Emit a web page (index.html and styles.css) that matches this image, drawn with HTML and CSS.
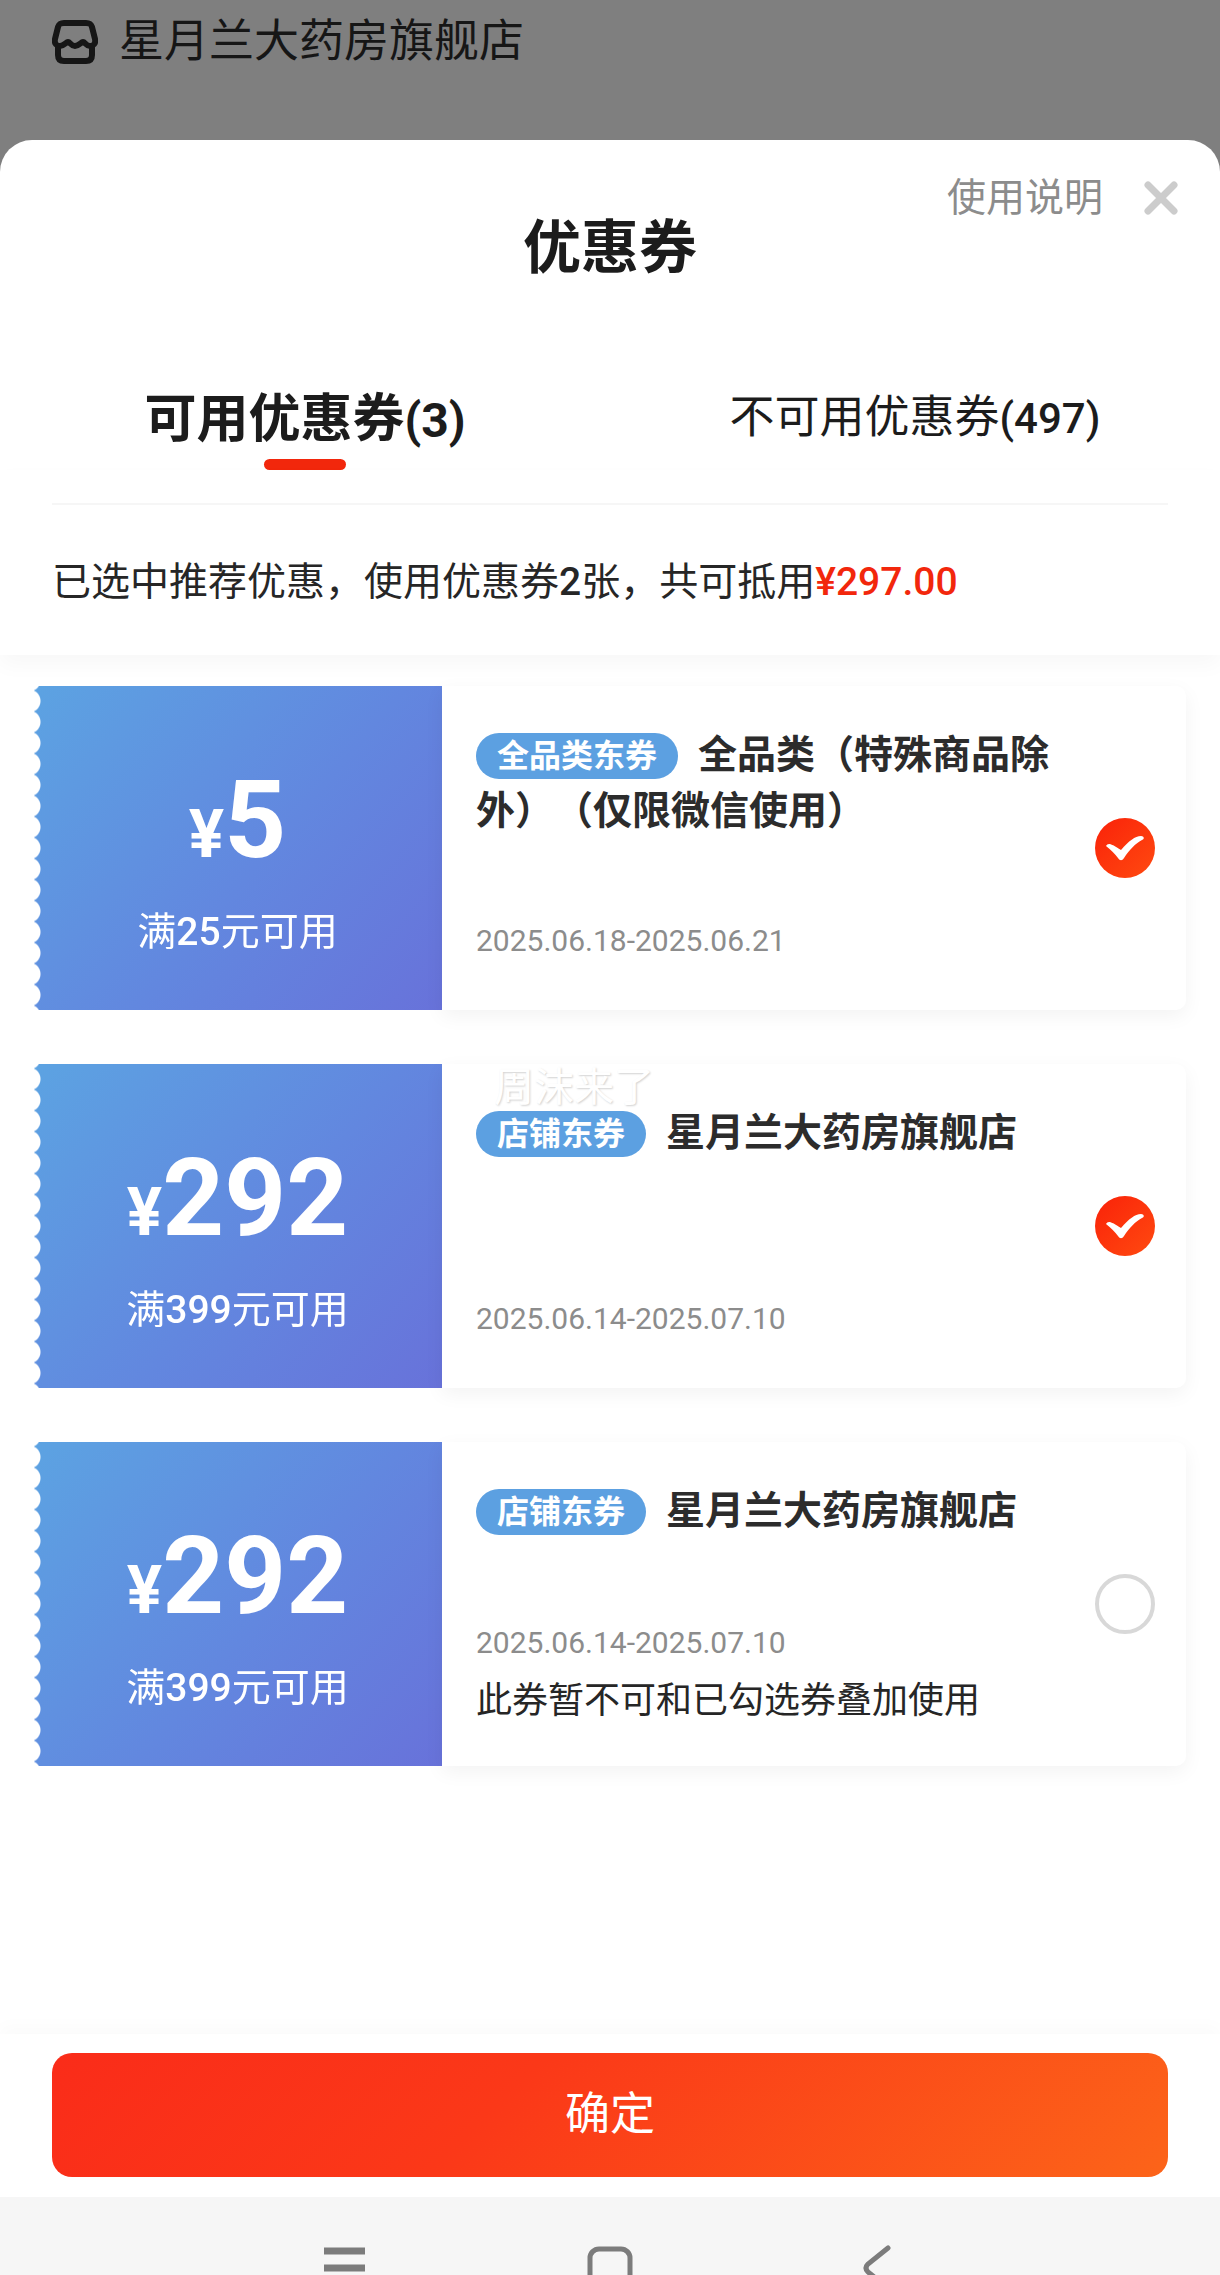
FILE: index.html
```html
<!DOCTYPE html>
<html lang="zh-CN">
<head>
<meta charset="utf-8">
<meta name="viewport" content="width=device-width, initial-scale=1">
<title>优惠券</title>
<link rel="stylesheet" href="styles.css">
</head>
<body>
<header class="store">
  <svg class="store-icon" viewBox="0 0 46 44" aria-hidden="true">
    <path d="M12 3h22c4 0 5 1 6 4l3 12c1 5-2 7-5 7-4 0-5-4-7-4s-4 4-8 4-5-4-7-4-4 4-8 4c-3 0-6-2-5-7L6 7c1-3 2-4 6-4z"/>
    <path d="M6 25v10c0 4 2 6 6 6h22c4 0 6-2 6-6V25"/>
  </svg>
  <span>星月兰大药房旗舰店</span>
</header>

<main class="sheet">
  <div class="sheet-head">
    <h1 class="sheet-title">优惠券</h1>
    <div class="sheet-actions">
      <a class="help" href="#">使用说明</a>
      <button class="close" type="button" aria-label="关闭">
        <svg viewBox="0 0 36 36" aria-hidden="true"><path d="M5 5l26 26M31 5L5 31"/></svg>
      </button>
    </div>
  </div>

  <div class="tabs" role="tablist">
    <button class="tab active" type="button" role="tab" aria-selected="true"><span>可用优惠券<b>(3)</b></span></button>
    <button class="tab" type="button" role="tab" aria-selected="false"><span>不可用优惠券<b>(497)</b></span></button>
  </div>

  <p class="summary">已选中推荐优惠，使用优惠券<b>2</b>张，共可抵用<strong>¥297.00</strong></p>

  <div class="coupons">
    <label class="coupon">
      <span class="stub">
        <span class="amount"><small>¥</small>5</span>
        <span class="condition">满<b>25</b>元可用</span>
      </span>
      <span class="detail">
        <span class="info">
          <span class="name"><span class="tag">全品类东券</span>全品类（特殊商品除外）（仅限微信使用）</span>
          <span class="date">2025.06.18-2025.06.21</span>
        </span>
        <span class="pick">
          <input type="checkbox" checked>
          <svg viewBox="0 0 60 60" aria-hidden="true"><path d="M11 28c2-4 6-2 15 4 8-9 14-14 20-14 3 0 4 3 1 4-7 4-12 9-18 18-2 3-4 3-6 0-3-4-7-8-12-12z"/></svg>
        </span>
      </span>
    </label>

    <label class="coupon">
      <span class="stub">
        <span class="amount"><small>¥</small>292</span>
        <span class="condition">满<b>399</b>元可用</span>
      </span>
      <span class="detail">
        <span class="watermark">周沫来了</span>
        <span class="info">
          <span class="name"><span class="tag">店铺东券</span>星月兰大药房旗舰店</span>
          <span class="date">2025.06.14-2025.07.10</span>
        </span>
        <span class="pick">
          <input type="checkbox" checked>
          <svg viewBox="0 0 60 60" aria-hidden="true"><path d="M11 28c2-4 6-2 15 4 8-9 14-14 20-14 3 0 4 3 1 4-7 4-12 9-18 18-2 3-4 3-6 0-3-4-7-8-12-12z"/></svg>
        </span>
      </span>
    </label>

    <label class="coupon">
      <span class="stub">
        <span class="amount"><small>¥</small>292</span>
        <span class="condition">满<b>399</b>元可用</span>
      </span>
      <span class="detail">
        <span class="info">
          <span class="name"><span class="tag">店铺东券</span>星月兰大药房旗舰店</span>
          <span class="date">2025.06.14-2025.07.10</span>
          <span class="note">此券暂不可和已勾选券叠加使用</span>
        </span>
        <span class="pick"><input type="checkbox"></span>
      </span>
    </label>
  </div>

  <div class="footer">
    <button class="confirm" type="button">确定</button>
  </div>
</main>

<nav class="system-bar">
  <button type="button" aria-label="最近任务"><svg viewBox="0 0 48 48"><path d="M4 8h41M4 25h41M4 42h41" stroke-linecap="butt" stroke-width="7"/></svg></button>
  <button type="button" aria-label="主屏幕"><svg viewBox="0 0 48 48"><rect x="4" y="6" width="40" height="40" rx="9"/></svg></button>
  <button type="button" aria-label="返回"><svg viewBox="0 0 48 48"><path d="M36 5L16 21q-4 4 0 8l20 16"/></svg></button>
</nav>
</body>
</html>
```

FILE: styles.css
```css
* {
  box-sizing: border-box;
}

body {
  margin: 0;
  min-height: 100vh;
  display: flex;
  flex-direction: column;
  background: #7f7f7f;
  color: #1c1c1c;
  font-family: Roboto, "Noto Sans CJK SC", sans-serif;
  text-spacing-trim: space-all;
}

button {
  padding: 0;
  border: 0;
  background: none;
  color: inherit;
  font: inherit;
}

b,
strong {
  font-weight: 500;
}

.store {
  display: flex;
  align-items: center;
  gap: 21px;
  padding: 12px 52px 68px;
  font-size: 45px;
  line-height: 60px;
  color: #161616;
}

.store-icon {
  width: 46px;
  height: 44px;
  fill: none;
  stroke: #161616;
  stroke-width: 6;
  stroke-linejoin: round;
}

.sheet {
  flex: 1;
  display: flex;
  flex-direction: column;
  border-radius: 32px 32px 0 0;
  background: #fff;
}

.sheet-head {
  display: grid;
  padding: 30px 41px 0;
}

.sheet-title,
.sheet-actions {
  grid-area: 1 / 1;
}

.sheet-title {
  margin: 40px 0 0;
  text-align: center;
  font-size: 58px;
  font-weight: 700;
  line-height: 76px;
}

.sheet-actions {
  justify-self: end;
  align-self: start;
  display: flex;
  align-items: center;
  gap: 40px;
  line-height: 56px;
}

.help {
  font-size: 39px;
  color: #8c8c8c;
  text-decoration: none;
}

.close {
  display: grid;
}

.close svg {
  width: 36px;
  height: 36px;
  stroke: #ccc;
  stroke-width: 7;
  stroke-linecap: round;
}

.tabs {
  display: grid;
  grid-template-columns: 1fr 1fr;
  align-items: start;
  padding-top: 94px;
}

.tab {
  font-size: 45px;
  line-height: 76px;
}

.tab b {
  font-size: 42px;
}

.tab.active {
  padding-top: 2px;
  font-size: 52px;
  font-weight: 700;
}

.tab.active b {
  font-size: 48px;
  font-weight: 700;
}

.tab.active::after {
  content: "";
  display: block;
  width: 82px;
  height: 11px;
  margin: 0 auto;
  border-radius: 6px;
  background: #f2270c;
}

.summary {
  margin: 0;
  padding: 84px 52px 45px;
  font-size: 39px;
  line-height: 56px;
  color: #262626;
  background: linear-gradient(#f6f6f6, #f6f6f6) 50% 33px / calc(100% - 104px) 2px no-repeat;
  box-shadow: 0 10px 20px rgba(0, 0, 0, 0.03);
}

.summary strong {
  color: #f2270c;
}

.coupons {
  flex: 1;
  display: flex;
  flex-direction: column;
  gap: 54px;
  padding: 31px 34px 54px 33px;
}

.coupon {
  display: flex;
  min-height: 324px;
}

.stub {
  flex: 0 0 409px;
  display: flex;
  flex-direction: column;
  align-items: center;
  gap: 22px;
  padding-top: 84px;
  color: #fff;
  background: linear-gradient(130deg, #5ca3e2, #6287df 55%, #6872da);
  -webkit-mask: radial-gradient(circle at -4px 50%, transparent 11px, #000 12px) 0 50% / 100% 21px repeat-y;
  mask: radial-gradient(circle at -4px 50%, transparent 11px, #000 12px) 0 50% / 100% 21px repeat-y;
}

.amount {
  font-size: 108px;
  font-weight: 700;
  line-height: 100px;
}

.amount small {
  font-size: 66px;
}

.condition {
  font-size: 39px;
  line-height: 50px;
}

.detail {
  position: relative;
  flex: 1;
  display: flex;
  align-items: center;
  justify-content: space-between;
  padding: 0 31px 0 34px;
  border-radius: 0 10px 10px 0;
  background: #fff;
  box-shadow: 0 6px 20px rgba(0, 0, 0, 0.05);
}

.info {
  align-self: stretch;
  flex: 0 1 590px;
  display: flex;
  flex-direction: column;
  padding: 41px 0 44px;
}

.name {
  font-size: 39px;
  font-weight: 700;
  line-height: 56px;
  color: #2c2c2c;
}

.tag {
  display: inline-block;
  margin-right: 20px;
  padding: 0 21px;
  border-radius: 23px;
  background: #5ca0e1;
  color: #fff;
  font-size: 32px;
  line-height: 46px;
  vertical-align: 1px;
}

.date {
  margin-top: auto;
  font-size: 30px;
  line-height: 50px;
  color: #8c8c8c;
}

.note {
  margin-top: 12px;
  font-size: 36px;
  line-height: 42px;
  color: #262626;
}

.pick {
  display: grid;
}

.pick > * {
  grid-area: 1 / 1;
  width: 60px;
  height: 60px;
}

.pick input {
  appearance: none;
  margin: 0;
  border: 4px solid #d8d8d8;
  border-radius: 50%;
}

.pick input:checked {
  border: 0;
  background: linear-gradient(135deg, #fa2209, #ff4a10);
}

.pick svg {
  fill: #fff;
  pointer-events: none;
}

/* faint overlay signature across the top of the coupon */
.watermark {
  position: absolute;
  top: -4px;
  left: 52px;
  font-size: 40px;
  line-height: 56px;
  color: #fff;
  text-shadow: 1px 1px 2px rgba(0, 0, 0, 0.18);
}

.footer {
  padding: 19px 52px 20px;
  box-shadow: 0 -8px 16px rgba(0, 0, 0, 0.02);
}

.confirm {
  display: block;
  width: 100%;
  padding: 32px 0;
  border-radius: 20px;
  background: linear-gradient(135deg, #fa2c19, #fb3818 40%, #fc6419);
  color: #fff;
  font-size: 45px;
  line-height: 60px;
}

.system-bar {
  display: flex;
  justify-content: center;
  gap: 218px;
  height: 78px;
  padding-top: 46px;
  overflow: hidden;
  background: #f6f6f6;
}

.system-bar svg {
  display: block;
  width: 48px;
  height: 48px;
  fill: none;
  stroke: #7c7c7c;
  stroke-width: 5;
  stroke-linecap: round;
}
```
